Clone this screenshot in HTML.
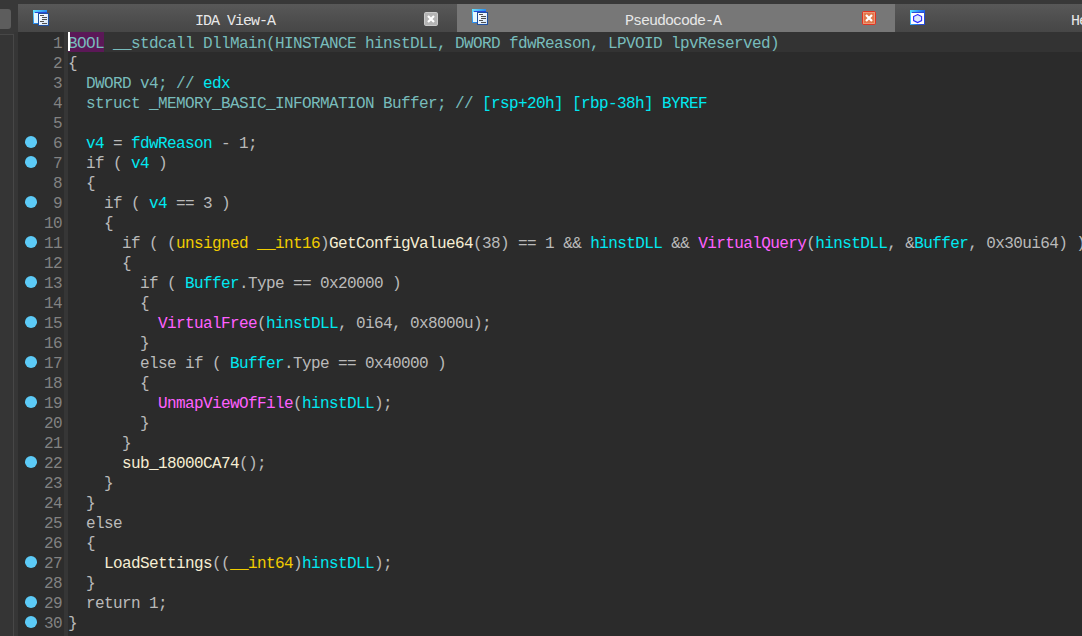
<!DOCTYPE html>
<html><head><meta charset="utf-8">
<style>
html,body{margin:0;padding:0;}
body{width:1082px;height:636px;overflow:hidden;background:#383838;position:relative;font-family:"Liberation Mono",monospace;}
.abs{position:absolute;}
#lpill{left:0;top:9px;width:11px;height:20px;background:#5d5d5d;border-radius:0 3px 3px 0;}
#lbox{left:-1px;top:34px;width:13px;height:700px;background:#353535;border:1px solid #474747;}
#lstrip{left:14px;top:32px;width:4px;height:604px;background:#363636;}
.tab{top:4px;height:28px;background:linear-gradient(#585858,#4b4b4b 70%,#474747);}
#tab1{left:18px;width:439px;}
#tab2{left:457px;width:438px;background:#777777;}
#tab3{left:895px;width:187px;}
.ttl{position:absolute;top:4px;height:28px;line-height:28px;color:#e8e8e8;font-size:15px;letter-spacing:-1px;font-family:"Liberation Mono",monospace;white-space:nowrap;}
.ico{position:absolute;width:16px;height:16px;}
.cls{position:absolute;width:14px;height:14px;}
#code{left:18px;top:32px;width:1064px;height:604px;background:#2b2b2b;overflow:hidden;}
#gut{position:absolute;left:0;top:0;width:46px;height:604px;background:#2d2d2d;}
#gstrip{position:absolute;left:46px;top:0;width:4px;height:604px;background:#363636;}
#cur{position:absolute;left:50px;top:0;width:1014px;height:20px;background:#333333;}
#sel{position:absolute;left:50px;top:0;width:36px;height:20px;background:#5b1857;}
#caret{position:absolute;left:50px;top:0;width:2px;height:19px;background:#ffffff;}
.ln{position:absolute;left:0;width:44px;text-align:right;height:20px;margin-top:2px;color:#828282;font-size:16px;letter-spacing:-0.6px;line-height:20px;}
.dot{position:absolute;left:7px;width:12px;height:11.6px;border-radius:50%;background:#5ccbf7;}
pre{margin:0;position:absolute;left:50px;top:2px;font-family:"Liberation Mono",monospace;font-size:16px;letter-spacing:-0.6px;line-height:20px;color:#bababa;white-space:pre;}
.t{color:#78bcbc;}
.c{color:#00e8f0;}
.m{color:#ff60ff;}
.y{color:#f0cc00;}
.f{color:#f6eed4;}
.g{color:#bababa;}
</style></head><body>
<div id="lpill" class="abs"></div>
<div id="lbox" class="abs"></div>
<div id="lstrip" class="abs"></div>

<div id="tab1" class="abs tab">
  <svg class="ico" style="left:15px;top:6px" viewBox="0 0 16 16" shape-rendering="crispEdges">
    <defs><linearGradient id="fg1" x1="0" y1="0" x2="1" y2="1"><stop offset="0" stop-color="#6ae8ff"/><stop offset="0.5" stop-color="#2a90f0"/><stop offset="1" stop-color="#1a5ad8"/></linearGradient>
    <linearGradient id="dg1" x1="0" y1="0" x2="1" y2="1"><stop offset="0" stop-color="#ffffff"/><stop offset="1" stop-color="#cfe2f8"/></linearGradient></defs>
    <rect x="0" y="0" width="14" height="14" fill="url(#fg1)"/>
    <rect x="2" y="2" width="12" height="1" fill="#2a4ad8"/>
    <rect x="1" y="3" width="12" height="10" fill="#e4f8ff"/>
    <rect x="5" y="3" width="11" height="13" fill="#1f4f9f"/>
    <rect x="6" y="4" width="9" height="11" fill="url(#dg1)"/>
    <rect x="7" y="5" width="4" height="1" fill="#505050"/>
    <rect x="9" y="7" width="5" height="1" fill="#505050"/>
    <rect x="9" y="9" width="5" height="1" fill="#505050"/>
    <rect x="7" y="11" width="4" height="1" fill="#505050"/>
    <rect x="9" y="13" width="5" height="1" fill="#505050"/>
  </svg>
  <div class="ttl" style="left:177px">IDA View-A</div>
  <svg class="cls" style="left:406px;top:8px" viewBox="0 0 14 14">
    <rect x="0.5" y="0.5" width="13" height="13" rx="1.2" fill="#b4b4b4" stroke="#cacaca"/>
    <path d="M4 4L10 10M10 4L4 10" stroke="#ffffff" stroke-width="2.2"/>
  </svg>
</div>

<div id="tab2" class="abs tab">
  <svg class="ico" style="left:15px;top:5px" viewBox="0 0 16 16" shape-rendering="crispEdges">
    <defs><linearGradient id="fg2" x1="0" y1="0" x2="1" y2="1"><stop offset="0" stop-color="#6ae8ff"/><stop offset="0.5" stop-color="#2a90f0"/><stop offset="1" stop-color="#1a5ad8"/></linearGradient>
    <linearGradient id="dg2" x1="0" y1="0" x2="1" y2="1"><stop offset="0" stop-color="#ffffff"/><stop offset="1" stop-color="#cfe2f8"/></linearGradient></defs>
    <rect x="0" y="0" width="14" height="14" fill="url(#fg2)"/>
    <rect x="2" y="2" width="12" height="1" fill="#2a4ad8"/>
    <rect x="1" y="3" width="12" height="10" fill="#e4f8ff"/>
    <rect x="5" y="3" width="11" height="13" fill="#1f4f9f"/>
    <rect x="6" y="4" width="9" height="11" fill="url(#dg2)"/>
    <rect x="7" y="5" width="4" height="1" fill="#505050"/>
    <rect x="9" y="7" width="5" height="1" fill="#505050"/>
    <rect x="9" y="9" width="5" height="1" fill="#505050"/>
    <rect x="7" y="11" width="4" height="1" fill="#505050"/>
    <rect x="9" y="13" width="5" height="1" fill="#505050"/>
  </svg>
  <div class="ttl" style="left:168px">Pseudocode-A</div>
  <svg class="cls" style="left:405px;top:7px" viewBox="0 0 14 14">
    <rect x="0.5" y="0.5" width="13" height="13" rx="1.2" fill="#e2774a" stroke="#e23222"/>
    <rect x="1.5" y="1.5" width="11" height="11" fill="none" stroke="#eea080" stroke-width="0.8"/>
    <path d="M4 4L10 10M10 4L4 10" stroke="#ffffff" stroke-width="2.2"/>
  </svg>
</div>

<div id="tab3" class="abs tab">
  <svg class="ico" style="left:15px;top:6px;width:15px;height:15px" viewBox="0 0 15 15">
    <defs><linearGradient id="fg3" x1="0" y1="0" x2="1" y2="0.4"><stop offset="0" stop-color="#5ae6ff"/><stop offset="0.55" stop-color="#2a8cf0"/><stop offset="1" stop-color="#2448d8"/></linearGradient></defs>
    <rect x="0" y="0" width="15" height="15" fill="url(#fg3)" shape-rendering="crispEdges"/>
    <rect x="2" y="2" width="12" height="1" fill="#2a4ad8" shape-rendering="crispEdges"/>
    <rect x="1" y="3" width="13" height="11" fill="#ffffff" shape-rendering="crispEdges"/>
    <path d="M7.6 4.6L11.6 6.6V10.6L7.6 12.6L3.6 10.6V6.6Z" fill="#dce8fc" stroke="#2a2aff" stroke-width="1.1"/>
  </svg>
  <div class="ttl" style="left:176px">Hex View-1</div>
</div>

<div id="code" class="abs">
  <div id="gut"></div>
  <div id="gstrip"></div>
  <div id="cur"></div>
  <div id="sel"></div>
  <div id="lns"><div class="ln" style="top:0px">1</div><div class="ln" style="top:20px">2</div><div class="ln" style="top:40px">3</div><div class="ln" style="top:60px">4</div><div class="ln" style="top:80px">5</div><div class="ln" style="top:100px">6</div><div class="dot" style="top:104px"></div><div class="ln" style="top:120px">7</div><div class="dot" style="top:124px"></div><div class="ln" style="top:140px">8</div><div class="ln" style="top:160px">9</div><div class="dot" style="top:164px"></div><div class="ln" style="top:180px">10</div><div class="ln" style="top:200px">11</div><div class="dot" style="top:204px"></div><div class="ln" style="top:220px">12</div><div class="ln" style="top:240px">13</div><div class="dot" style="top:244px"></div><div class="ln" style="top:260px">14</div><div class="ln" style="top:280px">15</div><div class="dot" style="top:284px"></div><div class="ln" style="top:300px">16</div><div class="ln" style="top:320px">17</div><div class="dot" style="top:324px"></div><div class="ln" style="top:340px">18</div><div class="ln" style="top:360px">19</div><div class="dot" style="top:364px"></div><div class="ln" style="top:380px">20</div><div class="ln" style="top:400px">21</div><div class="ln" style="top:420px">22</div><div class="dot" style="top:424px"></div><div class="ln" style="top:440px">23</div><div class="ln" style="top:460px">24</div><div class="ln" style="top:480px">25</div><div class="ln" style="top:500px">26</div><div class="ln" style="top:520px">27</div><div class="dot" style="top:524px"></div><div class="ln" style="top:540px">28</div><div class="ln" style="top:560px">29</div><div class="dot" style="top:564px"></div><div class="ln" style="top:580px">30</div><div class="dot" style="top:584px"></div></div>
  <pre id="src"><span class="t">BOOL __stdcall DllMain(HINSTANCE hinstDLL, DWORD fdwReason, LPVOID lpvReserved)</span>
{
<span class="t">  DWORD v4; // </span><span class="c">edx</span>
<span class="t">  struct _MEMORY_BASIC_INFORMATION Buffer; // </span><span class="c">[rsp+20h] [rbp-38h] BYREF</span>

  <span class="c">v4</span> = <span class="c">fdwReason</span> - 1;
  if ( <span class="c">v4</span> )
  {
    if ( <span class="c">v4</span> == 3 )
    {
      if ( (<span class="y">unsigned __int16</span>)<span class="f">GetConfigValue64</span>(38) == 1 &amp;&amp; <span class="c">hinstDLL</span> &amp;&amp; <span class="m">VirtualQuery</span>(<span class="c">hinstDLL</span>, &amp;<span class="c">Buffer</span>, 0x30ui64) ) == 48 )
      {
        if ( <span class="c">Buffer</span>.Type == 0x20000 )
        {
          <span class="m">VirtualFree</span>(<span class="c">hinstDLL</span>, 0i64, 0x8000u);
        }
        else if ( <span class="c">Buffer</span>.Type == 0x40000 )
        {
          <span class="m">UnmapViewOfFile</span>(<span class="c">hinstDLL</span>);
        }
      }
      <span class="f">sub_18000CA74</span>();
    }
  }
  else
  {
    <span class="f">LoadSettings</span>((<span class="y">__int64</span>)<span class="c">hinstDLL</span>);
  }
  return 1;
}</pre>
  <div id="caret"></div>
</div>
</body></html>
